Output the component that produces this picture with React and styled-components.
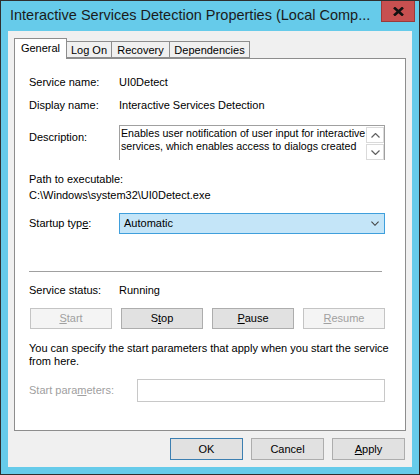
import React from 'react'
import styled, { createGlobalStyle } from 'styled-components'

const Global = createGlobalStyle`
  html, body {
    margin: 0;
    padding: 0;
    background: #fff;
  }
  * { box-sizing: border-box; }
`;

const Window = styled.div`
  width: 420px;
  height: 475px;
  border: 1px solid #2f2f2f;
  background: #66cbea;
  display: flex;
  flex-direction: column;
  font-family: 'Liberation Sans', Arial, sans-serif;
  font-size: 11px;
  color: #000;
`;

const TitleBar = styled.div`
  height: 30px;
  display: flex;
  align-items: flex-start;
`;

const Title = styled.div`
  flex: 1;
  padding: 6px 0 0 9px;
  font-size: 14.5px;
  line-height: 17px;
  color: #1b1b1b;
  white-space: nowrap;
  overflow: hidden;
`;

const CloseButton = styled.div`
  width: 34px;
  height: 21px;
  margin-right: 4px;
  background: #c75050;
  border: 1px solid #9a3a3a;
  border-top: none;
  display: flex;
  align-items: center;
  justify-content: center;
`;

const Client = styled.div`
  flex: 1;
  margin: 0 7px 7px 7px;
  background: #f0f0f0;
  padding: 7px 6px 7px 6px;
  display: flex;
  flex-direction: column;
`;

const TabStrip = styled.div`
  display: flex;
  align-items: flex-end;
  height: 20px;
  position: relative;
  z-index: 1;
`;

const Tab = styled.div`
  width: ${p => p.$w}px;
  height: ${p => (p.$active ? 21 : 17)}px;
  margin-bottom: ${p => (p.$active ? -1 : 0)}px;
  margin-left: ${p => (p.$first ? 0 : -1)}px;
  border: 1px solid #8d8d8d;
  border-bottom: ${p => (p.$active ? 'none' : '1px solid #8d8d8d')};
  background: ${p => (p.$active ? '#fff' : '#f0f0f0')};
  display: flex;
  justify-content: center;
  padding-top: ${p => (p.$active ? 3 : 2)}px;
  line-height: 13px;
`;

const Panel = styled.div`
  flex: 1;
  background: #fff;
  border: 1px solid #8d8d8d;
  padding: 17px 20px 0 14px;
  display: flex;
  flex-direction: column;
`;

const Row = styled.div`
  display: flex;
  align-items: ${p => p.$align || 'center'};
  margin-top: ${p => p.$mt || 0}px;
  line-height: 13px;
  white-space: nowrap;
`;

const Label = styled.div`
  width: ${p => p.$w || 90}px;
  flex: none;
  padding-top: ${p => p.$pt || 0}px;
  color: ${p => (p.$disabled ? '#a0a0a0' : '#000')};
`;

const TextBox = styled.div`
  width: 266px;
  height: 35px;
  border: 1px solid #a0a0a0;
  border-bottom: none;
  display: flex;
`;

const TextArea = styled.div`
  flex: 1;
  padding: 1px 0 0 1px;
  font-size: 10.65px;
  line-height: 13px;
  overflow: hidden;
`;

const ScrollBar = styled.div`
  width: 18px;
  display: flex;
  flex-direction: column;
  gap: 1px;
  padding-top: 1px;
`;

const ScrollButton = styled.div`
  height: 17px;
  border: 1px solid #dadada;
  display: flex;
  align-items: center;
  justify-content: center;
`;

const Combo = styled.div`
  width: 266px;
  height: 21px;
  background: #c4e5f8;
  border: 1px solid #3f9fdc;
  display: flex;
  align-items: center;
  justify-content: space-between;
  padding: 0 5px 0 4px;
`;

const Separator = styled.div`
  margin-top: 37px;
  width: 353px;
  height: 1px;
  background: #a0a0a0;
`;

const ControlButtons = styled.div`
  margin-top: 11px;
  padding-left: 1px;
  display: grid;
  grid-template-columns: repeat(4, 82px);
  column-gap: 9px;
`;

const Button = styled.div`
  width: ${p => p.$w || 'auto'};
  height: ${p => p.$h || 21}px;
  border: 1px solid ${p => (p.$default ? '#3c7fb1' : p.$disabled ? '#c4c4c4' : '#adadad')};
  background: ${p => (p.$disabled ? '#f4f4f4' : '#e1e1e1')};
  color: ${p => (p.$disabled ? '#a0a0a0' : '#000')};
  display: flex;
  align-items: center;
  justify-content: center;
  line-height: 13px;
  u { text-underline-offset: 1px; }
`;

const Paragraph = styled.div`
  margin-top: 13px;
  line-height: 13px;
  white-space: nowrap;
`;

const Input = styled.div`
  width: 248px;
  height: 23px;
  border: 1px solid #c8c8c8;
  background: #fff;
`;

const DialogButtons = styled.div`
  margin-top: 7px;
  padding-right: 1px;
  display: flex;
  justify-content: flex-end;
  gap: 8px;
`;

const Chevron = ({ up, color = '#606060', w = 9, h = 5 }) => (
  <svg width={w} height={h} viewBox="0 0 9 5">
    <path
      d={up ? 'M0.5 4.5 L4.5 0.5 L8.5 4.5' : 'M0.5 0.5 L4.5 4.5 L8.5 0.5'}
      fill="none"
      stroke={color}
      strokeWidth="1.2"
    />
  </svg>
)

export default function App() {
  return (
    <>
      <Global />
      <Window>
        <TitleBar>
          <Title>Interactive Services Detection Properties (Local Comp...</Title>
          <CloseButton>
            <svg width="11" height="9" viewBox="0 0 11 9">
              <path d="M1 0.5 L10 8.5 M10 0.5 L1 8.5" stroke="#111" strokeWidth="2.6" />
            </svg>
          </CloseButton>
        </TitleBar>
        <Client>
          <TabStrip>
            <Tab $w={53} $first $active>General</Tab>
            <Tab $w={46}>Log On</Tab>
            <Tab $w={59}>Recovery</Tab>
            <Tab $w={81}>Dependencies</Tab>
          </TabStrip>
          <Panel>
            <Row>
              <Label>Service name:</Label>
              <span>UI0Detect</span>
            </Row>
            <Row $mt={10}>
              <Label>Display name:</Label>
              <span>Interactive Services Detection</span>
            </Row>
            <Row $mt={13} $align="flex-start">
              <Label $pt={6}>Description:</Label>
              <TextBox>
                <TextArea>
                  Enables user notification of user input for interactive<br />
                  services, which enables access to dialogs created
                </TextArea>
                <ScrollBar>
                  <ScrollButton><Chevron up /></ScrollButton>
                  <ScrollButton><Chevron /></ScrollButton>
                </ScrollBar>
              </TextBox>
            </Row>
            <Row $mt={13}>Path to executable:</Row>
            <Row $mt={3}>C:\Windows\system32\UI0Detect.exe</Row>
            <Row $mt={11}>
              <Label>Startup typ<u>e</u>:</Label>
              <Combo>
                <span>Automatic</span>
                <Chevron color="#404040" w={8} h={5} />
              </Combo>
            </Row>
            <Separator />
            <Row $mt={12}>
              <Label>Service status:</Label>
              <span>Running</span>
            </Row>
            <ControlButtons>
              <Button $disabled><u>S</u>tart</Button>
              <Button>S<u>t</u>op</Button>
              <Button><u>P</u>ause</Button>
              <Button $disabled><u>R</u>esume</Button>
            </ControlButtons>
            <Paragraph>
              You can specify the start parameters that apply when you start the service<br />
              from here.
            </Paragraph>
            <Row $mt={11}>
              <Label $w={108} $disabled>Start para<u>m</u>eters:</Label>
              <Input />
            </Row>
          </Panel>
          <DialogButtons>
            <Button $w="73px" $h={22} $default>OK</Button>
            <Button $w="73px" $h={22}>Cancel</Button>
            <Button $w="73px" $h={22}><u>A</u>pply</Button>
          </DialogButtons>
        </Client>
      </Window>
    </>
  )
}
